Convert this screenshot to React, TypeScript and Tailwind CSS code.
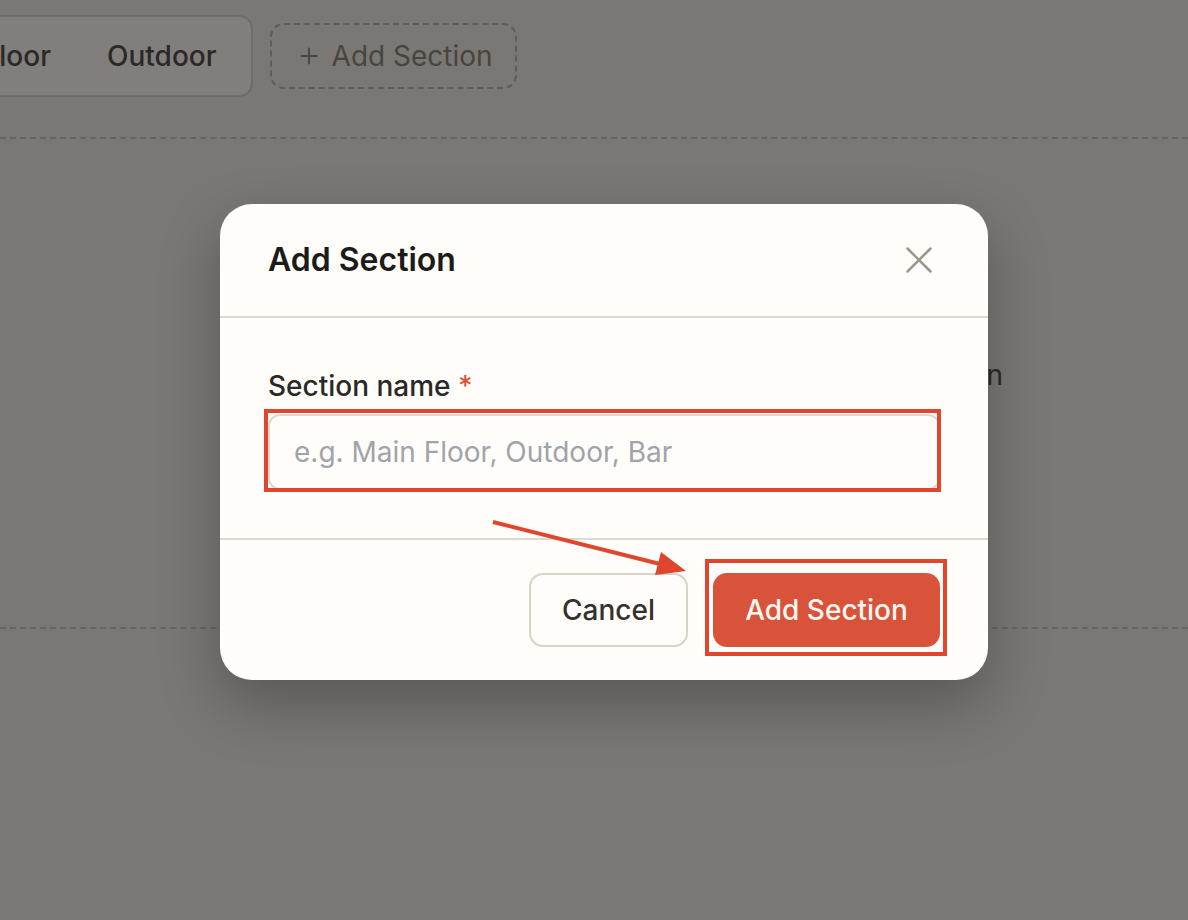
import { Plus } from 'lucide-react'

function PageBehind() {
    return (
        <div className="min-h-[920px] w-full overflow-hidden bg-[#7b7774] font-['Inter',sans-serif]">
            <div className="flex items-start gap-[17px] pt-[15px] ml-[-126px]">
                <div className="flex h-[82px] items-center rounded-[14px] border-2 border-[#6f6c69] bg-[#817e7b] px-[6px]">
                    <div className="px-[28px] text-[28px] font-medium text-[#2b2927]">Main Floor</div>
                    <div className="px-[28px] text-[28px] font-medium text-[#2b2927]">Outdoor</div>
                </div>
                <div className="mt-[8px] flex h-[66px] items-center gap-[10px] rounded-[14px] border-2 border-dashed border-[#5f5c59] pl-[24px] pr-[22px] text-[28px] text-[#48453f]">
                    <Plus className="h-[26px] w-[26px]" strokeWidth={1.7} />
                    Add Section
                </div>
            </div>
            <div className="mt-[40px] border-t-2 border-dashed border-[#686561]" />
            <div className="flex h-[488px] items-center justify-end pr-[185px] pb-[16px]">
                <p className="text-[28px] text-[#2b2927]">Add your first section to begin your plan</p>
            </div>
            <div className="border-t-2 border-dashed border-[#686561]" />
        </div>
    )
}

function AddSectionModal() {
    return (
        <div className="absolute left-[220px] top-[204px] w-[768px] overflow-hidden rounded-[32px] bg-[#fefdf9] font-['Inter',sans-serif] shadow-[0_24px_60px_rgba(0,0,0,0.28)]">
            <div className="flex items-center justify-between border-b-2 border-[#dcdad0] px-[48px] py-[38px]">
                <h2 className="text-[32px] font-semibold leading-[36px] text-[#1c1b19]">Add Section</h2>
                <button className="mr-[8px] text-[#9a988a]">
                    <svg width="26" height="26" viewBox="0 0 26 26" fill="none" stroke="currentColor" strokeWidth="2.5" strokeLinecap="round">
                        <line x1="1.5" y1="1.5" x2="24.5" y2="24.5" />
                        <line x1="24.5" y1="1.5" x2="1.5" y2="24.5" />
                    </svg>
                </button>
            </div>

            <div className="border-b-2 border-[#dcdad0] px-[48px] pt-[50px] pb-[48px]">
                <label className="block text-[28px] font-medium leading-[36px] text-[#2b2927]">
                    Section name <span className="text-[#d9533a]">*</span>
                </label>
                <div className="relative mt-[10px]">
                    <input
                        placeholder="e.g. Main Floor, Outdoor, Bar"
                        className="h-[76px] w-full rounded-[12px] border-2 border-[#dcdad0] bg-[#fefdf9] px-[24px] text-[28px] text-[#2b2927] outline-none placeholder:text-[#a0a3ab]"
                    />
                    <div className="pointer-events-none absolute -left-[4px] -right-[1px] -top-[5px] -bottom-[2px] border-[4px] border-[#e0462d]" />
                </div>
            </div>

            <div className="flex justify-end gap-[25px] px-[48px] py-[33px]">
                <button className="h-[74px] w-[159px] rounded-[14px] border-2 border-[#d6d4c8] bg-[#fefdf9] text-[28px] font-medium text-[#33312e]">
                    Cancel
                </button>
                <div className="relative">
                    <button className="h-[74px] w-[227px] rounded-[14px] bg-[#d9533a] text-[28px] font-medium text-[#fff8f2]">
                        Add Section
                    </button>
                    <div className="pointer-events-none absolute -left-[8px] -right-[7px] -top-[14px] -bottom-[9px] border-[4px] border-[#e0462d]" />
                </div>
            </div>
        </div>
    )
}

export default function App() {
    return (
        <div className="relative h-[920px] w-[1188px] overflow-hidden">
            <PageBehind />
            <AddSectionModal />
            {/* annotation arrow */}
            <svg className="pointer-events-none absolute left-0 top-0" width="1188" height="920">
                <line x1="493" y1="522" x2="660" y2="564" stroke="#e0462d" strokeWidth="4" />
                <polygon points="686,571 655,575 661,552" fill="#e0462d" />
            </svg>
        </div>
    )
}
